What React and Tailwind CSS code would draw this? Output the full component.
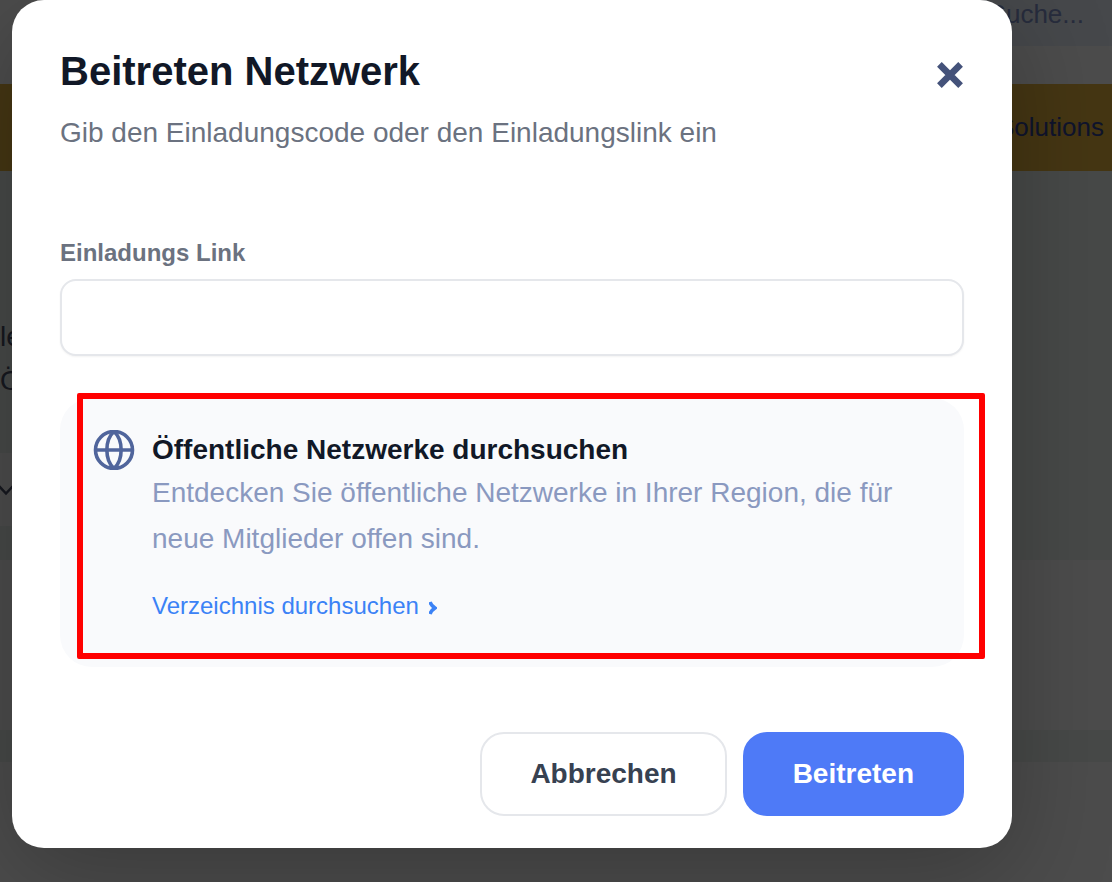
import { useState } from 'react';

function CloseIcon() {
  return (
    <svg
      className="size-7"
      viewBox="0 0 28 28"
      fill="none"
      stroke="currentColor"
      strokeWidth="6.6"
      aria-hidden="true"
    >
      <path d="M3.4 3.4 24.6 24.6M24.6 3.4 3.4 24.6" />
    </svg>
  );
}

function GlobeIcon() {
  return (
    <svg
      className="h-10 w-11 shrink-0 text-[#50659c]"
      viewBox="0 0 44 40"
      fill="none"
      stroke="currentColor"
      strokeWidth="3.6"
      aria-hidden="true"
    >
      <circle cx="22" cy="20" r="18.5" />
      <path d="M22 1.5C12.5 10 12.5 30 22 38.5C31.5 30 31.5 10 22 1.5Z" />
      <path d="M3.5 20h37" />
    </svg>
  );
}

function ChevronIcon() {
  return (
    <svg
      className="mt-1 h-4 w-2"
      viewBox="0 0 8 16"
      fill="none"
      stroke="currentColor"
      strokeWidth="3.6"
      aria-hidden="true"
    >
      <path d="M1 2Q2.2 5.6 6 8Q2.2 10.4 1 14" />
    </svg>
  );
}

function PageBehind() {
  return (
    <div className="flex min-h-screen flex-col text-[26px] text-[#8294cc]" inert>
      <header className="flex h-21 items-start justify-end bg-white">
        <div className="flex h-[46px] w-1/3 items-start justify-end bg-[#eaf0fa] pr-7 leading-7">
          Suche...
        </div>
      </header>
      <nav className="flex h-[87px] items-center justify-end bg-[#e6b440] pr-2 text-[#354393]">
        Solutions
      </nav>
      <section className="h-[389px] bg-[#eff5f2] pt-36 text-[28px] leading-11 text-[#4c5068]">
        <p>
          le
          <br />
          Ö
        </p>
        <div className="mt-[50px] flex h-[73px] w-1/4 items-center bg-white">
          <svg
            className="h-3 w-4"
            viewBox="0 0 16 12"
            fill="none"
            stroke="currentColor"
            strokeWidth="2.5"
          >
            <path d="M-1 2 6 9.5 13 2" />
          </svg>
        </div>
      </section>
      <section className="h-[170px] bg-white" />
      <div className="h-8 bg-[#eff5f2]" />
      <section className="grow bg-white" />
    </div>
  );
}

export default function App() {
  const [link, setLink] = useState('');

  return (
    <div className="relative min-h-screen overflow-hidden font-['Liberation_Sans',Arial,sans-serif]">
      <PageBehind />

      <div className="absolute inset-0 bg-black/70 pr-[100px] pl-3">
        <div
          role="dialog"
          aria-labelledby="dialog-title"
          className="rounded-[32px] bg-white px-12 pt-[47px] pb-8 shadow-[0_24px_100px_rgba(0,0,0,0.25)]"
        >
          <div className="flex items-start justify-between">
            <h1
              id="dialog-title"
              className="text-[40px] leading-12 font-bold text-[#111827]"
            >
              Beitreten Netzwerk
            </h1>
            <button type="button" aria-label="Schließen" className="mt-3.5 text-[#44527a]">
              <CloseIcon />
            </button>
          </div>
          <p className="mt-3.5 text-[28px] leading-12 text-[#6b7280]">
            Gib den Einladungscode oder den Einladungslink ein
          </p>

          <form onSubmit={(event) => event.preventDefault()}>
            <label
              htmlFor="invite-link"
              className="mt-20 block text-2xl leading-8 font-bold text-[#6b7280]"
            >
              Einladungs Link
            </label>
            <input
              id="invite-link"
              type="text"
              value={link}
              onChange={(event) => setLink(event.target.value)}
              className="mt-2.5 block h-[77px] w-full rounded-2xl border-2 border-[#e5e7eb] bg-white px-6 text-[28px] shadow-xs outline-none"
            />

            <div className="relative mt-[42px] rounded-[32px] bg-[#f9fafc] px-8 pt-8 pb-[41px]">
              <div className="flex items-start gap-4">
                <GlobeIcon />
                <div>
                  <h2 className="text-[28px] leading-10 font-bold text-[#111827]">
                    Öffentliche Netzwerke durchsuchen
                  </h2>
                  <p className="text-[28px] leading-[46px] text-[#8a99c0]">
                    Entdecken Sie öffentliche Netzwerke in Ihrer Region, die für neue
                    Mitglieder offen sind.
                  </p>
                  <a
                    href="#verzeichnis"
                    className="mt-6 flex items-center gap-2.5 text-2xl leading-10 text-[#3b82f6]"
                  >
                    Verzeichnis durchsuchen
                    <ChevronIcon />
                  </a>
                </div>
              </div>
              {/* highlight frame around the directory hint */}
              <div className="pointer-events-none absolute -top-[5px] -right-[21px] bottom-2 left-[17px] rounded-xs border-6 border-[#ff0000]" />
            </div>

            <div className="mt-[65px] flex justify-end gap-4 text-[28px] font-bold">
              <button
                type="button"
                className="h-21 rounded-3xl border-2 border-[#e5e7eb] bg-white px-12 text-[#374151]"
              >
                Abbrechen
              </button>
              <button
                type="submit"
                className="h-21 rounded-3xl border-2 border-[#4e7af7] bg-[#4e7af7] px-12 text-white"
              >
                Beitreten
              </button>
            </div>
          </form>
        </div>
      </div>
    </div>
  );
}
